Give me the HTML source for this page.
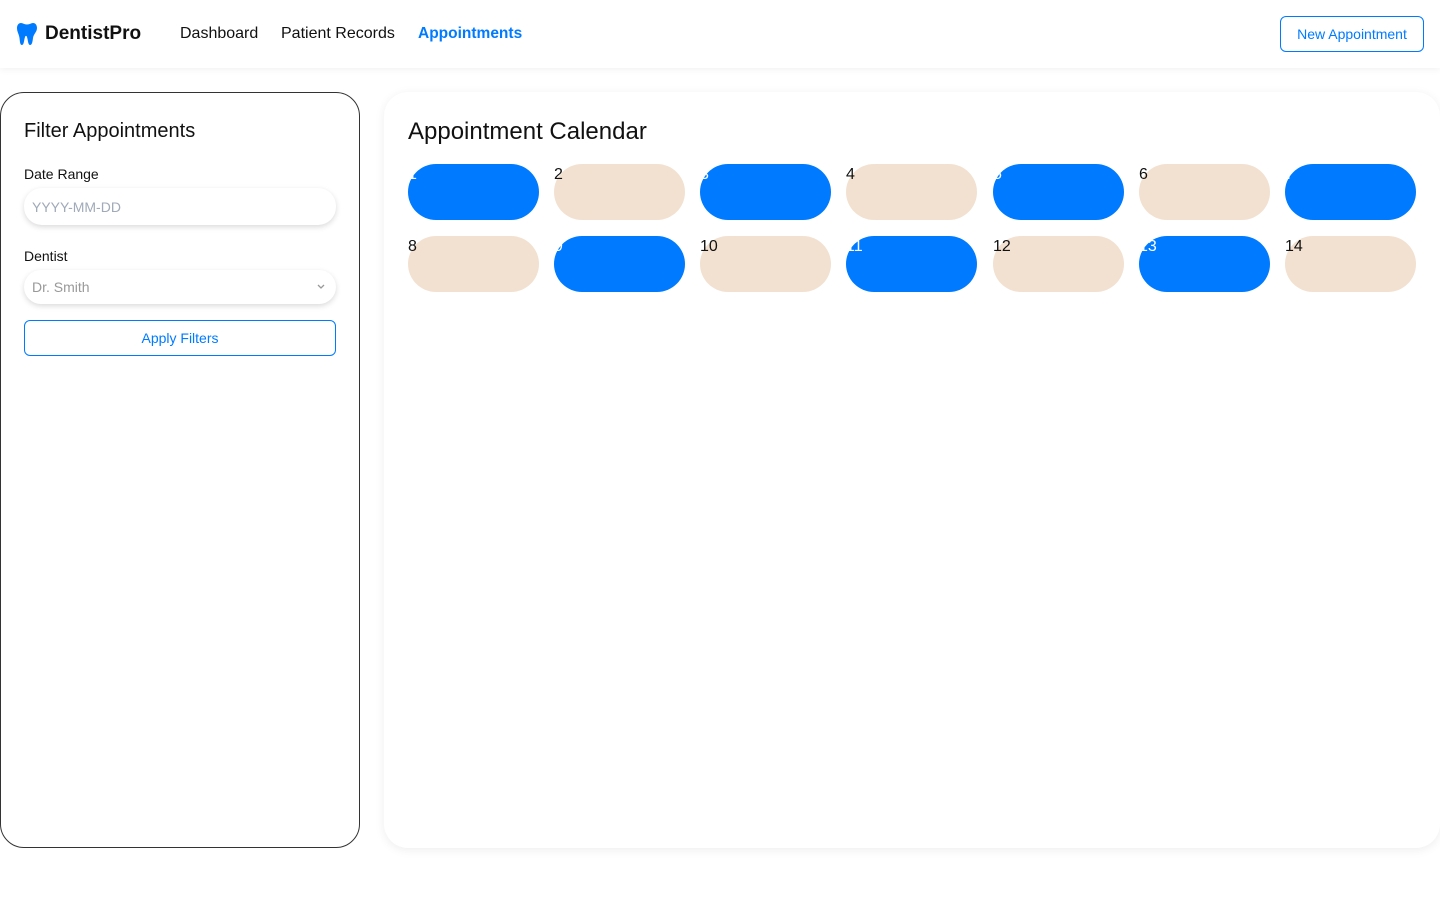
<!DOCTYPE html>
<html><head><meta charset="utf-8"><style>
*{box-sizing:border-box;margin:0;padding:0}
body{width:1440px;height:900px;background:#fff;font-family:"Liberation Sans",Arial,sans-serif;color:#111;position:relative;overflow:hidden}
.hdr{position:absolute;left:0;top:0;width:1440px;height:68px;background:#fff;box-shadow:0 2px 6px rgba(0,0,0,.05)}
.logo{position:absolute;left:17px;top:22px;display:flex;align-items:center;font-weight:bold;font-size:19px}
.logo span{margin-left:8px}
.nav{position:absolute;top:25px;font-size:16px}
.btn-new{position:absolute;left:1280px;top:16px;width:144px;height:36px;border:1px solid #007bff;border-radius:6px;color:#007bff;font-size:14px;display:flex;align-items:center;justify-content:center;background:#fff}
.left{position:absolute;left:0;top:92px;width:360px;height:756px;border:1px solid #333;border-radius:24px;background:#fff}
.left h2{position:absolute;left:23px;top:27px;font-size:20px;font-weight:normal}
.lbl{position:absolute;left:23px;font-size:14px}
.inp{position:absolute;left:23px;width:312px;border-radius:18px;background:#fff;box-shadow:0 2px 6px rgba(0,0,0,.15);font-size:14px;color:#999;padding-left:8px;display:flex;align-items:center}
.apply{position:absolute;left:23px;top:227px;width:312px;height:36px;border:1px solid #007bff;border-radius:6px;color:#007bff;font-size:14px;display:flex;align-items:center;justify-content:center}
.right{position:absolute;left:384px;top:92px;width:1056px;height:756px;border-radius:24px;background:#fff;box-shadow:0 2px 10px rgba(0,0,0,.07)}
.right h2{position:absolute;left:24px;top:26px;font-size:24px;font-weight:normal}
.cell{position:absolute;width:131px;height:56px;border-radius:28px;font-size:16px;line-height:22px}
.b{background:#007bff;color:#fff}
.e{background:#f2e1d0;color:#111}
</style></head><body>
<div class="hdr">
 <div class="logo"><svg width="20" height="24" viewBox="0 0 20 24"><path d="M4 1C1 1 0 4 0 6c0 4 2 6 2.5 10S3 23 5 23s2-5 3-8c.5-1.5 1.5-1.5 2 0 1 3 1 8 3 8s2.5-3 3-7S20 10 20 6c0-2-1-5-4-5-2 0-3 1.5-6 1.5S6 1 4 1z" fill="#007bff"/></svg><span>DentistPro</span></div>
 <div class="nav" style="left:180px">Dashboard</div>
 <div class="nav" style="left:281px">Patient Records</div>
 <div class="nav" style="left:418px;color:#007bff;font-weight:bold;font-size:15.5px">Appointments</div>
 <div class="btn-new">New Appointment</div>
</div>
<div class="left">
 <h2>Filter Appointments</h2>
 <div class="lbl" style="top:73px">Date Range</div>
 <div class="inp" style="top:95px;height:37px;color:#a0aab8">YYYY-MM-DD</div>
 <div class="lbl" style="top:155px">Dentist</div>
 <div class="inp" style="top:177px;height:34px">Dr. Smith<svg style="position:absolute;right:11px;top:14px" width="8" height="6" viewBox="0 0 8 6"><path d="M1 1l3 3 3-3" stroke="#999" fill="none" stroke-width="1.3"/></svg></div>
 <div class="apply">Apply Filters</div>
</div>
<div class="right">
 <h2>Appointment Calendar</h2>
 <div class="cell b" style="left:24px;top:72px">1</div>
 <div class="cell e" style="left:170px;top:72px">2</div>
 <div class="cell b" style="left:316px;top:72px">3</div>
 <div class="cell e" style="left:462px;top:72px">4</div>
 <div class="cell b" style="left:609px;top:72px">5</div>
 <div class="cell e" style="left:755px;top:72px">6</div>
 <div class="cell b" style="left:901px;top:72px">7</div>
 <div class="cell e" style="left:24px;top:144px">8</div>
 <div class="cell b" style="left:170px;top:144px">9</div>
 <div class="cell e" style="left:316px;top:144px">10</div>
 <div class="cell b" style="left:462px;top:144px">11</div>
 <div class="cell e" style="left:609px;top:144px">12</div>
 <div class="cell b" style="left:755px;top:144px">13</div>
 <div class="cell e" style="left:901px;top:144px">14</div>
</div>
</body></html>
